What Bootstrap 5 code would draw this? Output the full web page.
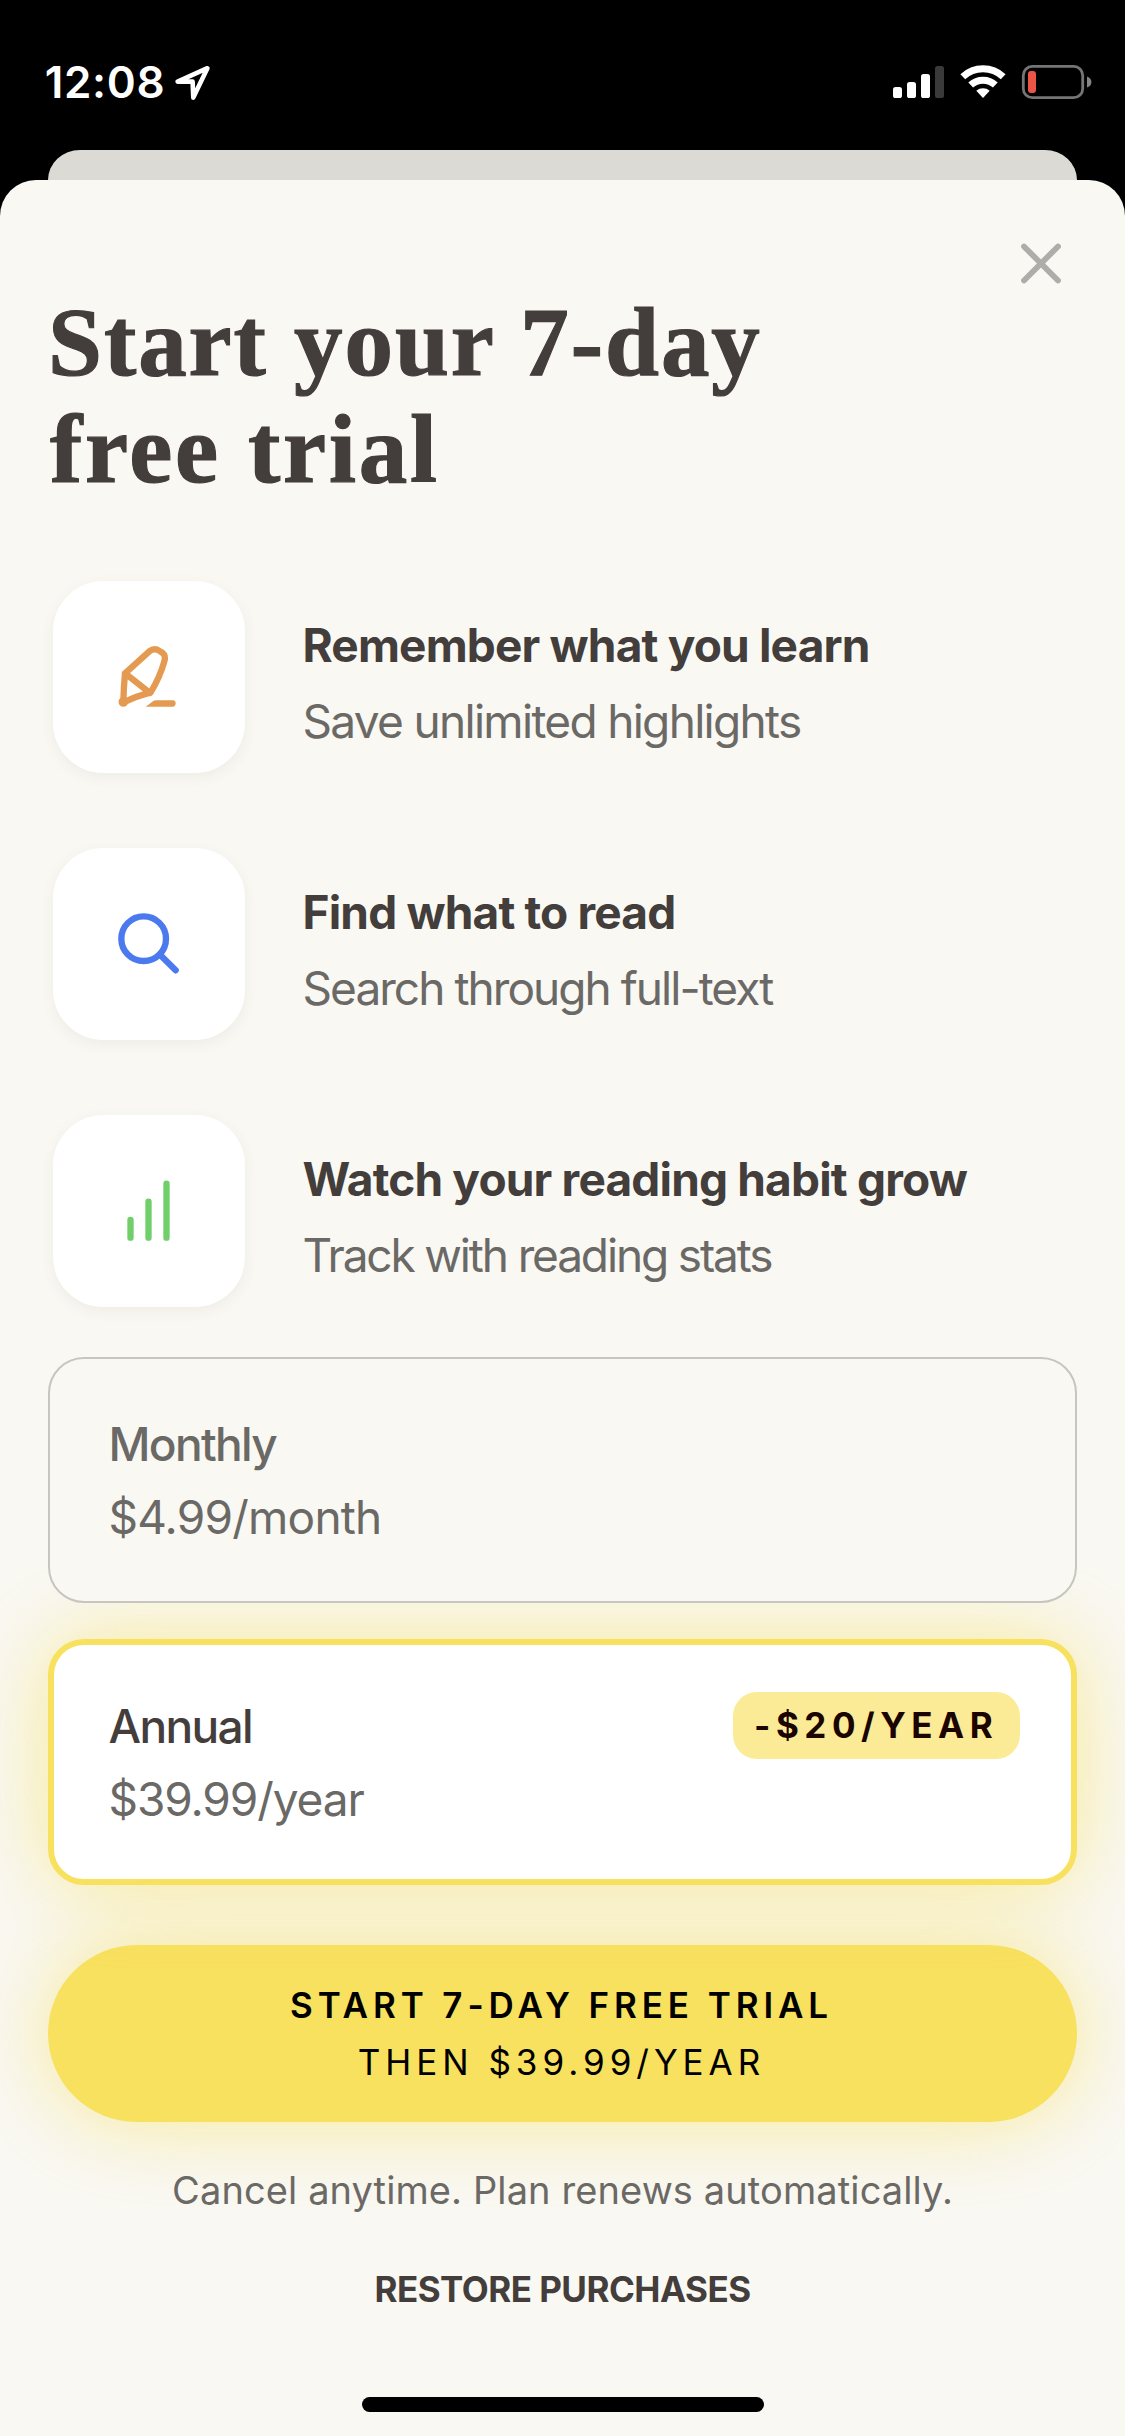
<!DOCTYPE html>
<html lang="en">
<head>
<meta charset="utf-8">
<meta name="viewport" content="width=device-width, initial-scale=1">
<title>Start your 7-day free trial</title>
<link href="https://cdn.jsdelivr.net/npm/bootstrap@5.3.0/dist/css/bootstrap.min.css" rel="stylesheet">
<style>
  :root { --ink: #433d3b; --soft: #6b6966; --paper: #f9f8f3; --sun: #f8e15f; }
  body { background: #000; color: var(--ink); font-family: Inter, "Liberation Sans", sans-serif; width: 1125px; height: 2436px; overflow: hidden; }
  .status-bar { height: 150px; padding: 58px 33px 0 44.7px; }
  .clock { font-size: 44px; line-height: 48px; font-weight: 600; letter-spacing: .7px; }
  .clock-arrow { margin: 5px 0 0 7px; }
  .status-icons { margin-top: 4px; }
  .back-sheet { height: 30px; margin: 0 48px; background: #dbdad5; border-radius: 32px 32px 0 0 / 30px 30px 0 0; }
  .sheet { height: 2256px; background: var(--paper); border-radius: 36px 36px 0 0; padding: 0 48px; }
  .sheet-top { height: 109px; padding: 59px 12px 0 0; }
  .headline { font: 700 97px/107px "Liberation Serif", serif; letter-spacing: 1.95px; margin: 0 0 78px; -webkit-text-stroke: 1.2px var(--ink); }
  .headline-end { letter-spacing: 2.8px; margin-left: 2px; }
  .features { gap: 75px; padding-left: 5px; margin-bottom: 50px; }
  .feature { height: 192px; gap: 57.5px; }
  .tile { width: 192px; height: 192px; border-radius: 50px; background: #fff; box-shadow: 0 4px 14px rgba(90,85,60,.07); }
  .feature-text { padding-top: 26px; line-height: 76px; font-size: 46px; white-space: nowrap; }
  .feature-name { font-weight: 700; letter-spacing: -.82px; }
  .soft { color: var(--soft); }
  .plan { height: 246px; border-radius: 36px; border: 2px solid #c6c5c0; font-size: 46px; line-height: 73px; padding: 49px 55px 0 58.5px; background: var(--paper); position: relative; z-index: 1; }
  .plan-active { border: 6px solid var(--sun); background: #fff; padding: 45px 51px 0 54.5px; margin-top: 36px; z-index: 0; box-shadow: 0 0 84px rgba(248,225,95,.62); }
  .plan-name { font-weight: 500; letter-spacing: -1.65px; }
  .saving { width: 287px; height: 67px; margin-top: 2px; padding-left: 21px; border-radius: 24px; background: #fbeb97; color: #1b0500; font-size: 35px; line-height: 67px; font-weight: 700; letter-spacing: 5.53px; white-space: nowrap; }
  .cta { height: 177px; margin-top: 60px; padding: 1px 0 0; border: 0; font-size: 35px; line-height: 57px; color: #000; background: var(--sun); box-shadow: 0 0 84px rgba(248,225,95,.62); }
  .cta:hover { background: var(--sun); color: #000; }
  .cta-main { font-weight: 600; letter-spacing: 4.89px; margin-left: -2px; }
  .cta-sub { letter-spacing: 4.96px; margin-left: -2px; }
  .fine { font-size: 38px; line-height: 48px; letter-spacing: .11px; margin: 44px 0 51px; position: relative; z-index: 1; }
  .restore { font-size: 35px; line-height: 48px; font-weight: 700; letter-spacing: -.52px; color: var(--ink); }
  .home-bar { width: 402px; height: 15px; background: #000; margin: 84px auto 0; }
</style>
</head>
<body>
<header class="status-bar d-flex justify-content-between align-items-start text-white">
  <div class="d-flex">
    <span class="clock">12:08</span>
    <svg class="clock-arrow" width="40" height="40" viewBox="174 63 40 40" fill="none" stroke="#fff" stroke-width="4.6" stroke-linejoin="round"><path d="M209.4 68.2 L179.6 81.6 H194.6 L195.3 97.6 Z"/></svg>
  </div>
  <svg class="status-icons" width="200" height="40" viewBox="892 62 200 40">
    <g fill="#fff"><rect x="893" y="87" width="9" height="11" rx="2.6"/><rect x="907" y="82" width="9" height="16" rx="2.6"/><rect x="921" y="74" width="9" height="24" rx="2.6"/><rect x="935" y="66" width="9" height="32" rx="2.6" fill="#3a3a3a"/></g>
    <g fill="none" stroke="#fff" stroke-width="7"><path d="M962.8 76.8 A29.5 29.5 0 0 1 1003.2 76.8"/><path d="M970.7 85 A18 18 0 0 1 995.3 85"/></g>
    <path fill="#fff" d="M976.3 90.8 A10.3 10.3 0 0 1 989.7 90.8 L983 98 Z"/>
    <rect x="1023.3" y="66.3" width="59.4" height="31.4" rx="9" fill="none" stroke="#757575" stroke-width="2.8"/>
    <rect x="1028" y="71" width="8" height="22" rx="3" fill="#ec5545"/>
    <path d="M1087 76.5 Q1091.4 78 1091.4 82 T1087 87.5 Z" fill="#858585"/>
  </svg>
</header>
<div class="back-sheet"></div>
<main class="sheet">
  <div class="sheet-top d-flex justify-content-end">
    <svg width="48" height="48" viewBox="0 0 48 48" role="button" aria-label="Close" stroke="#aeada9" stroke-width="5.8" stroke-linecap="round"><path d="M7 7.5 L41 41.5 M41 7.5 L7 41.5"/></svg>
  </div>
  <h1 class="headline">Start your 7-day<br><span class="headline-end">free trial</span></h1>

  <section class="features d-flex flex-column">
    <div class="feature d-flex">
      <div class="tile flex-shrink-0">
        <svg width="192" height="192" viewBox="39 32 576 576" fill="none" stroke="#e59a51" stroke-width="19" stroke-linejoin="round" stroke-linecap="round"><path d="M255 309 L328 243 Q343 231 359 242 L368 248 Q378 256 373 273 Q360 320 332 366 Q290 377 250 396 Q251 350 255 309 L330 368"/><circle cx="250" cy="395" r="5"/><path d="M317 409 L337 394 Q342 390 350 390 H399 Q407 391 407 399 Q407 408 399 409 Z" fill="#e59a51" stroke="none"/></svg>
      </div>
      <div class="feature-text"><div class="feature-name">Remember what you learn</div><div class="soft" style="letter-spacing:-1.69px">Save unlimited highlights</div></div>
    </div>
    <div class="feature d-flex">
      <div class="tile flex-shrink-0">
        <svg width="192" height="192" viewBox="39 24 576 576" fill="none" stroke="#4b79ee" stroke-width="19" stroke-linecap="round"><circle cx="311" cy="296" r="67"/><path d="M360 344 L407 391"/></svg>
      </div>
      <div class="feature-text"><div class="feature-name">Find what to read</div><div class="soft" style="letter-spacing:-1.95px">Search through full-text</div></div>
    </div>
    <div class="feature d-flex">
      <div class="tile flex-shrink-0">
        <svg width="192" height="192" viewBox="39 824 576 576" fill="none" stroke="#70cf6b" stroke-width="19" stroke-linecap="round"><path d="M271.5 1139 V1192 M325.5 1084 V1192 M379.5 1030 V1192"/></svg>
      </div>
      <div class="feature-text"><div class="feature-name">Watch your reading habit grow</div><div class="soft" style="letter-spacing:-2.14px">Track with reading stats</div></div>
    </div>
  </section>

  <section class="plan soft">
    <div class="plan-name">Monthly</div>
    <div style="letter-spacing:-.78px">$4.99/month</div>
  </section>
  <section class="plan plan-active d-flex justify-content-between align-items-start">
    <div>
      <div class="plan-name">Annual</div>
      <div class="soft" style="letter-spacing:-1.1px">$39.99/year</div>
    </div>
    <div class="saving">-$20/YEAR</div>
  </section>

  <button type="button" class="cta btn rounded-pill w-100 d-block">
    <span class="cta-main d-block">START 7-DAY FREE TRIAL</span>
    <span class="cta-sub d-block">THEN $39.99/YEAR</span>
  </button>
  <p class="fine soft text-center">Cancel anytime. Plan renews automatically.</p>
  <a href="#" class="restore d-block text-center text-decoration-none">RESTORE PURCHASES</a>
  <div class="home-bar rounded-pill"></div>
</main>
<script src="https://cdn.jsdelivr.net/npm/bootstrap@5.3.0/dist/js/bootstrap.bundle.min.js"></script>
</body>
</html>
